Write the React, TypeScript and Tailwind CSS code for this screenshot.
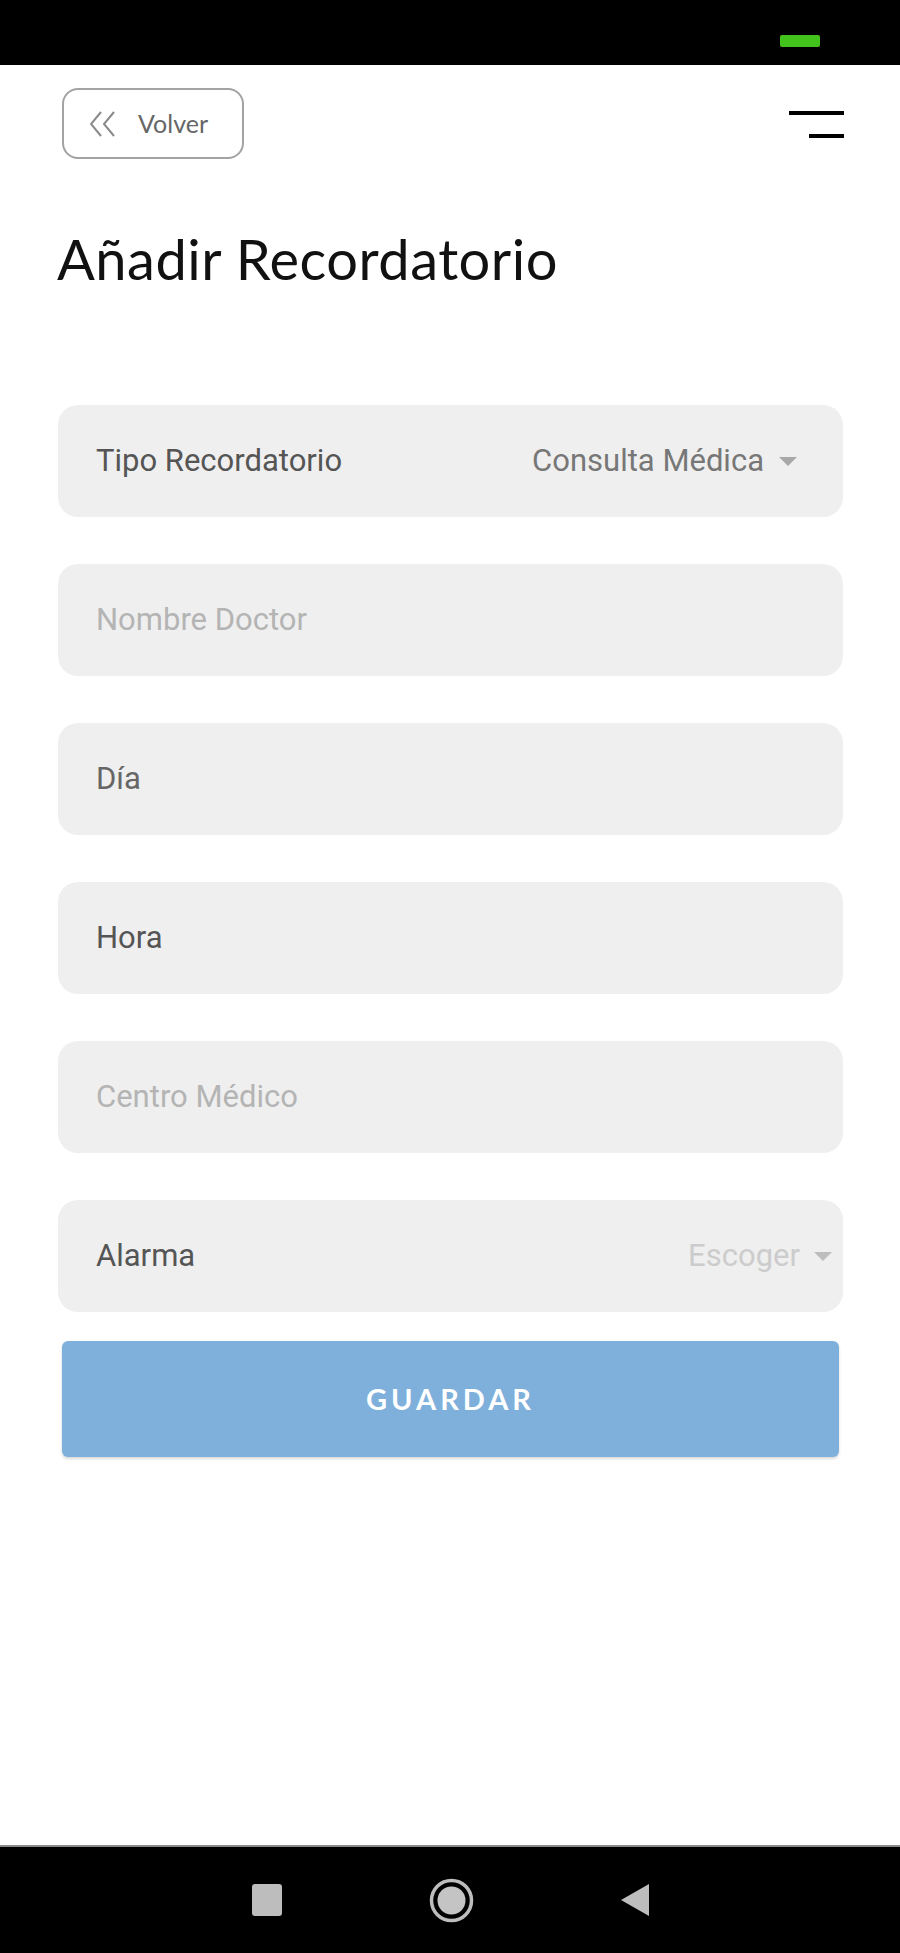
import { ReactNode } from 'react'

const fieldText = "font-['Roboto',sans-serif] text-[31px]"

function Caret({ color = '#a8a8a8' }: { color?: string }) {
  return (
    <svg width="18" height="9" viewBox="0 0 18 9">
      <polygon points="0,0 18,0 9,9" fill={color} />
    </svg>
  )
}

function Field({ children, className }: { children: ReactNode; className?: string }) {
  return (
    <div
      className={`flex h-[112px] items-center rounded-[20px] bg-[#efefef] pl-[38px] ${className ?? ''}`}
    >
      {children}
    </div>
  )
}

export default function App() {
  return (
    <div className="flex h-[1953px] w-[900px] flex-col bg-white">
      {/* --- Status bar --- */}
      <div className="flex h-[65px] shrink-0 items-start justify-end bg-black pr-[80px] pt-[35px]">
        <div className="h-[12px] w-[40px] rounded-[2px] bg-[#43c41c]" />
      </div>

      <div className="flex flex-1 flex-col">
        {/* --- Header --- */}
        <div className="mt-[23px] flex items-start justify-between pl-[62px] pr-[56px]">
          <button className="flex h-[71px] w-[182px] items-center gap-[22px] rounded-[16px] border-2 border-[#a3a3a3] pl-[26px]">
            <svg width="26" height="26" viewBox="0 0 26 26" fill="none">
              <path d="M11 1 L1 13 L11 25" stroke="#8a8a8a" strokeWidth="2" />
              <path d="M24 1 L14 13 L24 25" stroke="#8a8a8a" strokeWidth="2" />
            </svg>
            <span className="font-['Lato',sans-serif] text-[25px] text-[#666]">Volver</span>
          </button>
          <div className="mt-[23px] flex flex-col items-end gap-[19px]">
            <div className="h-[4px] w-[55px] bg-black" />
            <div className="h-[4px] w-[35px] bg-black" />
          </div>
        </div>

        {/* --- Title --- */}
        <h1 className="ml-[57px] mt-[72px] font-['Lato',sans-serif] text-[56px] leading-[56px] tracking-[0.5px] text-[#111]">
          Añadir Recordatorio
        </h1>

        {/* --- Form --- */}
        <div className="ml-[58px] mr-[57px] mt-[118px] flex flex-col gap-[47px]">
          <Field className="justify-between pr-[46px]">
            <span className={`${fieldText} text-[#555]`}>Tipo Recordatorio</span>
            <div className="flex items-center gap-[15px]">
              <span className={`${fieldText} text-[#777]`}>Consulta Médica</span>
              <Caret />
            </div>
          </Field>
          <Field>
            <span className={`${fieldText} text-[#b4b4b4]`}>Nombre Doctor</span>
          </Field>
          <Field>
            <span className={`${fieldText} text-[#666]`}>Día</span>
          </Field>
          <Field>
            <span className={`${fieldText} text-[#555]`}>Hora</span>
          </Field>
          <Field>
            <span className={`${fieldText} text-[#b4b4b4]`}>Centro Médico</span>
          </Field>
          <Field className="justify-between pr-[11px]">
            <span className={`${fieldText} text-[#555]`}>Alarma</span>
            <div className="flex items-center gap-[14px]">
              <span className={`${fieldText} text-[#cccccc]`}>Escoger</span>
              <Caret color="#bdbdbd" />
            </div>
          </Field>
        </div>

        <button className="ml-[62px] mr-[61px] mt-[29px] flex h-[116px] items-center justify-center rounded-[6px] bg-[#7eb0db] shadow-[0_2px_3px_rgba(0,0,0,0.15)]">
          <span className="font-['Lato',sans-serif] text-[29px] font-bold tracking-[4px] text-white">
            GUARDAR
          </span>
        </button>
      </div>

      {/* --- Nav bar --- */}
      <div className="flex h-[108px] shrink-0 items-center justify-center gap-[147px] border-t-2 border-[#8a8a8a] bg-black">
        <div className="h-[32px] w-[30px] rounded-[3px] bg-[#bdbdbd]" />
        <svg width="45" height="45" viewBox="0 0 45 45">
          <circle cx="22.5" cy="22.5" r="20" fill="none" stroke="#bdbdbd" strokeWidth="3.5" />
          <circle cx="22.5" cy="22.5" r="14" fill="#c4c4c4" />
        </svg>
        <svg width="28" height="32" viewBox="0 0 28 32">
          <polygon points="28,0 28,32 0,16" fill="#bdbdbd" />
        </svg>
      </div>
    </div>
  )
}
